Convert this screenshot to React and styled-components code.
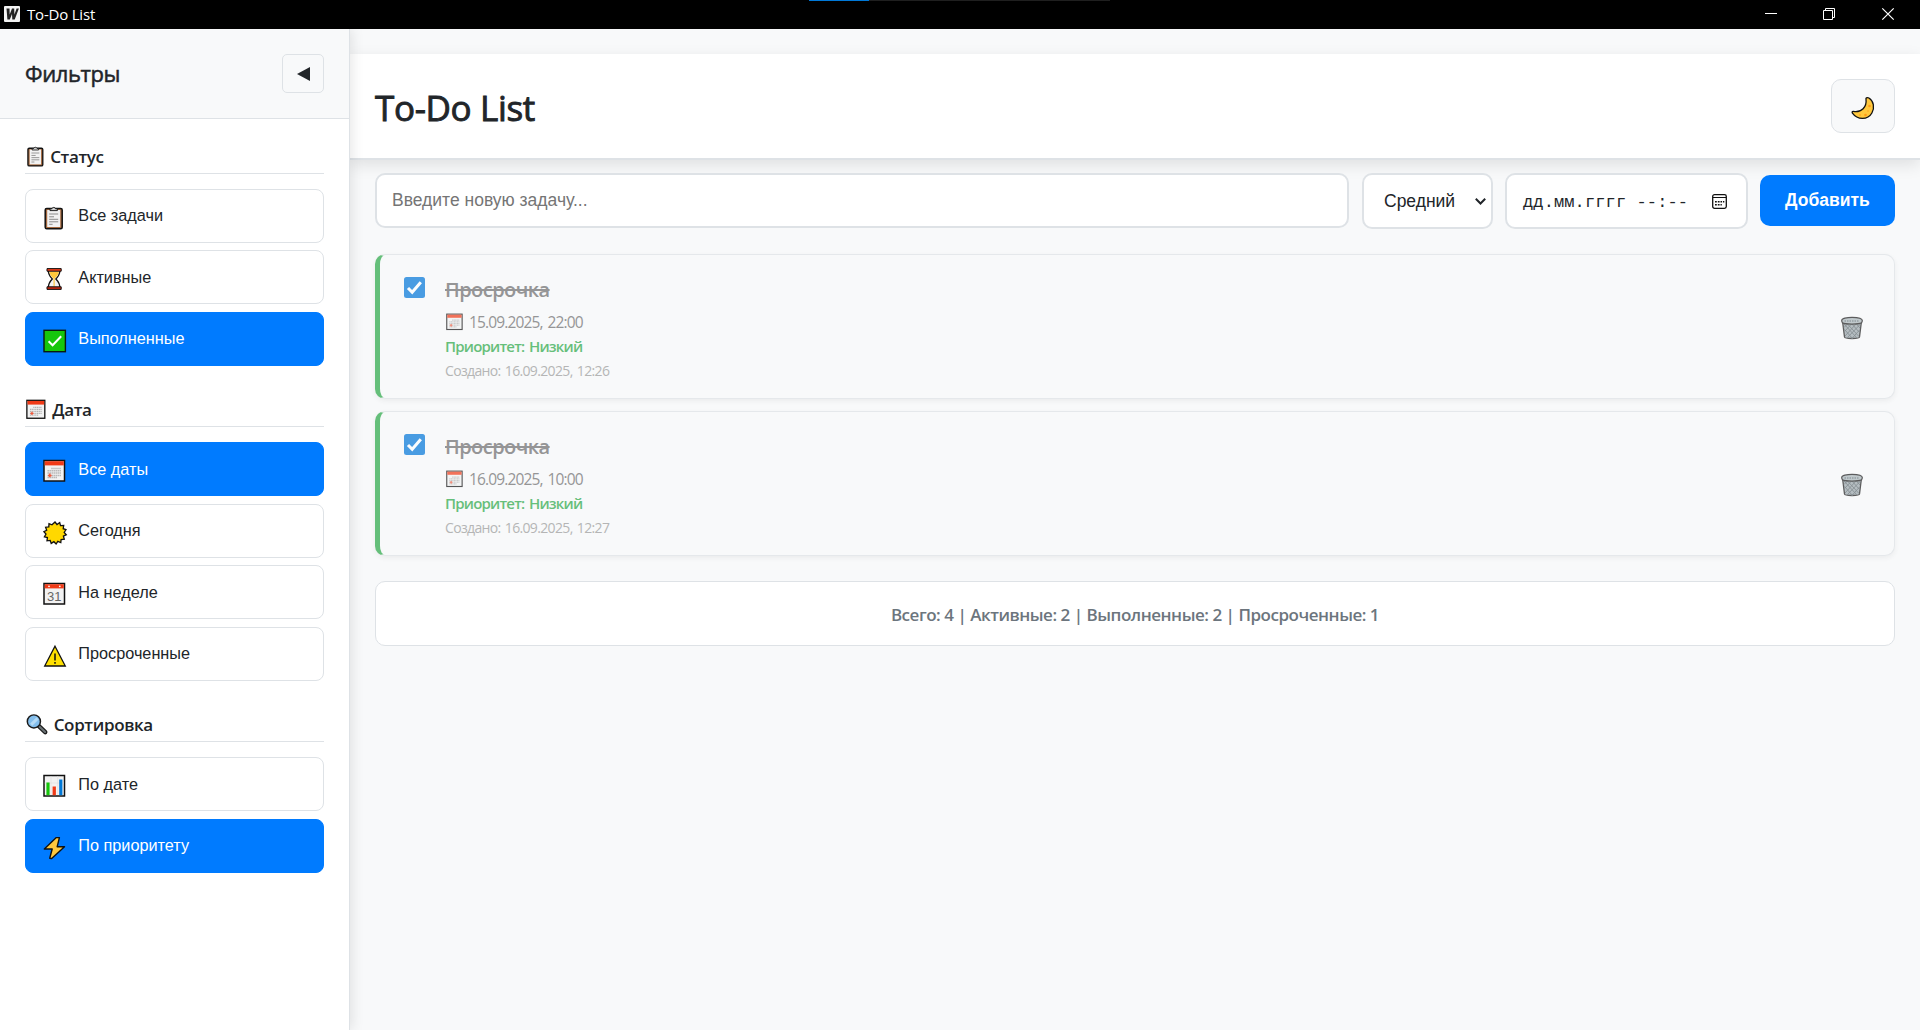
import React from "react";
import styled, { createGlobalStyle } from "styled-components";

const ui = `"Open Sans", "Noto Sans", sans-serif`;
const sans = `"Liberation Sans", Arial, sans-serif`;

const Global = createGlobalStyle`
  * { box-sizing: border-box; }
  html, body, #root { height: 100%; margin: 0; }
  body { background: #f8f9fa; color: #212529; font-family: ${ui}; overflow: hidden; }
  button, input { font-family: ${sans}; margin: 0; }
`;

const Window = styled.div`
  display: flex;
  flex-direction: column;
  height: 100vh;
`;
const TitleBar = styled.header`
  position: relative;
  flex: none;
  display: flex;
  align-items: center;
  height: 29px;
  padding: 0 0 1px 4px;
  background: #000;
  color: #fff;
`;
const AppName = styled.span`
  flex: 1;
  margin-left: 7px;
  font-size: 15px;
  letter-spacing: -0.2px;
`;
const LoadStrip = styled.div`
  position: absolute;
  top: 0;
  left: 809px;
  width: 301px;
  height: 1px;
  background: linear-gradient(to right, #0078d7 60px, #1f1f1f 60px);
`;
const Controls = styled.div`
  display: flex;
  gap: 46px;
  padding-right: 26px;
  & > :last-child { margin-left: 1px; }
`;
const Glyph = styled.svg`
  display: block;
  flex: none;
  overflow: visible;
  width: ${(p) => p.$w}px;
  height: ${(p) => p.$h || p.$w}px;
`;
const Body = styled.div`
  flex: 1;
  display: flex;
  min-height: 0;
`;

const Sidebar = styled.aside`
  position: relative;
  z-index: 2;
  flex: none;
  width: 350px;
  background: #fff;
  border-right: 1px solid #dee2e6;
  box-shadow: 2px 0 12px rgba(0, 0, 0, 0.1);
`;
const SidebarHead = styled.div`
  display: flex;
  align-items: center;
  justify-content: space-between;
  height: 90px;
  padding: 0 25px;
  background: #f8f9fa;
  border-bottom: 1px solid #dee2e6;
`;
const SidebarTitle = styled.h3`
  margin: -2px 0 0;
  font-size: 22px;
  line-height: 30px;
  font-weight: 400;
  letter-spacing: -0.4px;
  -webkit-text-stroke: 0.5px currentColor;
`;
const Collapse = styled.button`
  display: grid;
  place-items: center;
  width: 42px;
  height: 39px;
  padding: 0;
  background: #f8f9fa;
  border: 1px solid #dee2e6;
  border-radius: 5px;
`;
const Sections = styled.div`
  display: flex;
  flex-direction: column;
  gap: 31.2px;
  padding: 24.7px 25px;
`;
const SectionTitle = styled.h4`
  display: flex;
  align-items: center;
  gap: ${(p) => p.$gap}px;
  height: 30.2px;
  margin: 0 0 15px;
  padding: 0 0 4px 1.2px;
  border-bottom: 1px solid #dee2e6;
  font-size: 17px;
  font-weight: 600;
  letter-spacing: -0.35px;
`;
const FilterList = styled.div`
  display: flex;
  flex-direction: column;
  gap: 7.5px;
`;
const Filter = styled.button`
  display: flex;
  align-items: center;
  gap: 11.5px;
  height: 54px;
  padding: 0 16px 0 16.8px;
  border: 1px solid ${(p) => (p.$active ? "#007bff" : "#dee2e6")};
  border-radius: 8px;
  background: ${(p) => (p.$active ? "#007bff" : "#fff")};
  color: ${(p) => (p.$active ? "#fff" : "#212529")};
  font-size: 16.25px;
  text-align: left;
  & > svg { margin-top: 4px; }
`;

const Main = styled.main`
  flex: 1;
  min-width: 0;
  padding-top: 25px;
`;
const PageHead = styled.div`
  display: flex;
  align-items: center;
  justify-content: space-between;
  height: 106px;
  padding: 0 25px;
  background: #fff;
  border-bottom: 2px solid #dee2e6;
  box-shadow: 0 5px 15px rgba(0, 0, 0, 0.1);
`;
const PageTitle = styled.h1`
  margin: 3px 0 0;
  font-size: 35px;
  line-height: 44px;
  font-weight: 400;
  letter-spacing: -0.35px;
  -webkit-text-stroke: 0.9px currentColor;
`;
const ThemeButton = styled.button`
  display: grid;
  place-items: center;
  width: 64px;
  height: 54px;
  padding: 3px 0 0;
  background: #f8f9fa;
  border: 1px solid #dee2e6;
  border-radius: 10px;
`;
const Content = styled.div`
  padding: 13px 25px 0;
`;
const AddForm = styled.div`
  display: flex;
  align-items: flex-start;
  height: 56px;
`;
const TaskInput = styled.input`
  width: 974px;
  height: 55px;
  margin-right: 13px;
  padding: 0 15px;
  background: #fff;
  border: 2px solid #dee2e6;
  border-radius: 10px;
  font-size: 17.5px;
  outline: none;
  &::placeholder { color: #757575; opacity: 1; }
`;
const PrioritySelect = styled.button`
  display: flex;
  align-items: center;
  justify-content: space-between;
  width: 131px;
  height: 56px;
  margin-right: 12px;
  padding: 0 5px 0 20px;
  background: #fff;
  color: #212529;
  border: 2px solid #dee2e6;
  border-radius: 10px;
  font-size: 17.5px;
`;
const DateField = styled.div`
  display: flex;
  align-items: center;
  justify-content: space-between;
  width: 243px;
  height: 56px;
  margin-right: 12px;
  padding: 0 19px 0 16px;
  background: #fff;
  border: 2px solid #dee2e6;
  border-radius: 10px;
  font-family: "Liberation Mono", monospace;
  font-size: 17px;
  letter-spacing: 0.12px;
  white-space: pre;
  & > span { margin-top: 2px; }
`;
const AddButton = styled.button`
  width: 135px;
  height: 51px;
  margin-top: 2px;
  padding: 0;
  border: 0;
  border-radius: 10px;
  background: #007bff;
  color: #fff;
  font-size: 17.5px;
  font-weight: 700;
`;
const TaskList = styled.div`
  display: flex;
  flex-direction: column;
  gap: 12.5px;
  margin-top: 25px;
`;
const Task = styled.article`
  display: flex;
  align-items: center;
  height: 144.5px;
  padding: 0 30.5px 0 24px;
  background: #f8f9fa;
  border: 1px solid #dee2e6;
  border-left: 5px solid #28a745;
  border-radius: 10px;
  box-shadow: 0 2px 5px rgba(0, 0, 0, 0.07);
  opacity: 0.7;
  & > svg { margin-top: 4px; }
`;
const Check = styled.span`
  display: grid;
  place-items: center;
  align-self: flex-start;
  width: 21px;
  height: 21px;
  margin: 22px 20px 0 0;
  border-radius: 2.5px;
  background: #0075d9;
`;
const TaskText = styled.div`
  flex: 1;
  display: flex;
  flex-direction: column;
  align-items: flex-start;
  padding-top: 4px;
`;
const TaskName = styled.div`
  height: 36px;
  line-height: 33px;
  font-size: 20px;
  font-weight: 600;
  letter-spacing: -0.55px;
  color: #6c6c6c;
  text-decoration: line-through;
  text-decoration-thickness: 2px;
`;
const Due = styled.div`
  display: flex;
  align-items: center;
  gap: 5px;
  height: 25px;
  padding-left: 1px;
  font-size: 15.5px;
  letter-spacing: -0.85px;
  word-spacing: 1.5px;
  color: #6c6c6c;
`;
const Priority = styled.div`
  height: 25px;
  line-height: 25px;
  font-size: 15px;
  font-weight: 600;
  letter-spacing: -0.8px;
  word-spacing: 1.5px;
  color: #28a745;
`;
const Created = styled.div`
  height: 24px;
  line-height: 24px;
  font-size: 14px;
  letter-spacing: -0.65px;
  word-spacing: 1.2px;
  color: #999;
`;
const Stats = styled.div`
  display: grid;
  place-items: center;
  height: 65px;
  margin-top: 25px;
  padding-top: 2px;
  background: #fff;
  border: 1px solid #dee2e6;
  border-radius: 10px;
  color: #6c757d;
  font-size: 17px;
  font-weight: 600;
  letter-spacing: -0.47px;
`;

const art = {
  clipboard: (
    <>
      <rect x="2.2" y="2.6" width="17" height="20.2" rx="1.5" fill="#a5693f" stroke="#111" strokeWidth="1.5" />
      <path d="M4.200 4h13v17H4.200z" fill="#f2f2f2" />
      <path d="M7 4.6V2.8h1.8a2 2 0 0 1 3.8 0h1.8v1.8z" fill="#cfcfcf" stroke="#111" strokeWidth=".9" />
      <path d="M6.2 8h9M6.2 10.8h4.8M6.2 13.3h9M6.2 15.8h9M6.2 18.3h3.4" stroke="#8b8b8b" strokeWidth="1" />
    </>
  ),
  hourglass: (
    <>
      <path d="M5.3 3h11.6c0 4-1 6-4 9 3 3 4 5 4 9H5.3c0-4 1-6 4-9-3-3-4-5-4-9z" fill="#f2f2f2" stroke="#111" strokeWidth="1.3" />
      <path d="M6.200 4.600h9.800c-.5 3-2 5.300-4.300 6.900v8h-1.200v-8C8.200 9.900 6.700 7.600 6.200 4.600z" fill="#ffc83d" />
      <path d="M4 1.600h14.200v2.600H4z" fill="#f03a17" stroke="#111" strokeWidth="1" />
      <path d="M4 19.800h14.200v2.600H4z" fill="#c8260c" stroke="#111" strokeWidth="1" />
    </>
  ),
  done: (
    <>
      <rect x="1" y="1.300" width="21.400" height="21.400" fill="#16c60c" stroke="#0a1a10" strokeWidth="1.400" />
      <path d="M5.600 12.300l4 4 8.600-9" fill="none" stroke="#fff" strokeWidth="2" />
    </>
  ),
  calendar: (
    <>
      <rect x="1" y="1.500" width="20.500" height="20.500" fill="#f2f2f2" stroke="#111" strokeWidth="1.500" />
      <path d="M1.700 2.200h19.100v4.200H1.700z" fill="#f03a17" />
      <path d="M8.300 9.500h10M4.500 11.800h13.800M4.500 14.100h13.800M4.500 16.400h13.800M4.500 18.500h9.500" stroke="#b3b3b3" strokeWidth="1.500" strokeDasharray="1.400 .6" />
      <path d="M6.800 14.600v3.600M5 16.400h3.600" stroke="#f0593c" strokeWidth="1.500" />
    </>
  ),
  sun: (
    <path
      d="M12 1l2 2.500L16.700 1.500l.8 3.100 3.200-.1-.5 3.200 2.800 1-1.800 2.700 2.100 2.300-2.900 1.500.9 3-3.200.3-.3 3.100-3-1.200-1.700 2.600-2.200-2.300-2.700 1.700-1-3-3.200.4.4-3.200-3-.8 1.600-2.800L.900 10.700l2.800-1.500-1.100-3 3.200-.3.200-3.200 3 1.100z"
      fill="#ffd800"
      stroke="#111"
      strokeWidth="1.300"
    />
  ),
  week: (
    <>
      <rect x="1" y="1.500" width="20.500" height="20.500" fill="#f2f2f2" stroke="#111" strokeWidth="1.500" />
      <path d="M1.700 2.200h19.100v4.200H1.700z" fill="#f03a17" />
      <circle cx="6" cy="4.300" r=".9" fill="#fff" />
      <circle cx="16.800" cy="4.300" r=".9" fill="#fff" />
      <text x="11.300" y="18.900" textAnchor="middle" fontFamily="Liberation Sans, sans-serif" fontSize="13" fill="#666">31</text>
    </>
  ),
  warning: (
    <>
      <path d="M12 2.200L22.300 22H1.700z" fill="#ffe000" stroke="#111" strokeWidth="1.300" />
      <path d="M12 9.500v7M12 18v1.800" stroke="#111" strokeWidth="1.500" />
    </>
  ),
  search: (
    <>
      <path d="M14.500 13.500l7.500 7.200" stroke="#1b1b1b" strokeWidth="5" strokeLinecap="round" />
      <path d="M15.500 14.500l6.300 6" stroke="#6b7376" strokeWidth="2.400" strokeLinecap="round" />
      <circle cx="9" cy="8.500" r="7.500" fill="#83beec" stroke="#1b1b1b" strokeWidth="1.700" />
      <path d="M4.800 10.800l7.200-7.200 2.400 2.600-7.400 7.400z" fill="#b5daf5" />
    </>
  ),
  chart: (
    <>
      <rect x="1" y="1.500" width="20.500" height="20.500" fill="#f2f2f2" stroke="#111" strokeWidth="1.500" />
      <path d="M1.700 9h19M8 2v19M14.700 2v19" stroke="#ddd" strokeWidth=".6" />
      <path d="M3.400 8.500h3.200v12.700H3.400z" fill="#16c60c" />
      <path d="M9.600 12.500h3.300v8.700H9.600z" fill="#f03a17" />
      <path d="M16.200 5.500h3.200v15.700h-3.200z" fill="#0078d7" />
    </>
  ),
  bolt: (
    <path d="M13.300 1.600L1.300 13h7.900l-2.500 9.300 2 .2L21.500 10.700h-7.300l2.200-9.100z" fill="#ffc83d" stroke="#111" strokeWidth="1.400" strokeLinejoin="round" />
  ),
  moon: (
    <>
      <path d="M15.500 1.800c-.6.300-.7.700-.5 1.300 1 7.800-4.500 13.800-12.600 12.300-1.300-.1-1.500.8-1 1.800 5 6.900 15.300 7.100 19.500-.2 3-5.300 1.800-12-3-15-.8-.5-1.600-.6-2.400-.2z" fill="#ffc83d" stroke="#111" strokeWidth="1.300" />
      <circle cx="18.500" cy="10" r="1.300" fill="#ff9a16" />
      <circle cx="14.500" cy="19" r="1.300" fill="#ff9a16" />
      <circle cx="9" cy="19" r=".8" fill="#ff9a16" />
      <circle cx="17" cy="15" r=".7" fill="#ff9a16" />
    </>
  ),
  trash: (
    <>
      <path d="M2.500 5l2 16c.3 2 14.700 2 15 0l2-16z" fill="#9aa5aa" stroke="#1b1b1b" strokeWidth="1.300" />
      <path
        d="M4 8l13 14M4.500 13.500l8 9M7 7.500l12 13M11.500 7.500l8 9M16 7.500l4 4.500M20.500 8L7 22M19.500 14l-8 9M16.500 7.500L5 20M12 7.500L4.500 15.500M8 7.500L4 11.500"
        stroke="#59656b"
        strokeWidth=".9"
      />
      <path d="M1.700 4.600C1.700.300 22.300.300 22.300 4.600c0 .9-.3 1.500-.8 2.300-3 1.500-16 1.500-19 0-.5-.8-.8-1.400-.8-2.300z" fill="#a9b5b9" stroke="#1b1b1b" strokeWidth="1.200" />
      <path d="M4.500 5h15" stroke="#6c7a80" strokeWidth="1.600" strokeDasharray="1.500 1" />
    </>
  ),
};

const Icon = ({ name, size = 24 }) => (
  <Glyph $w={size} viewBox="0 0 24 24">{art[name]}</Glyph>
);

const sections = [
  {
    title: "Статус", icon: "clipboard", gap: 3,
    items: [["clipboard", "Все задачи"], ["hourglass", "Активные"], ["done", "Выполненные", true]],
  },
  {
    title: "Дата", icon: "calendar", gap: 5,
    items: [["calendar", "Все даты", true], ["sun", "Сегодня"], ["week", "На неделе"], ["warning", "Просроченные"]],
  },
  {
    title: "Сортировка", icon: "search", gap: 6.5,
    items: [["chart", "По дате"], ["bolt", "По приоритету", true]],
  },
];

const tasks = [
  { name: "Просрочка", due: "15.09.2025, 22:00", created: "16.09.2025, 12:26" },
  { name: "Просрочка", due: "16.09.2025, 10:00", created: "16.09.2025, 12:27" },
];

const TaskCard = ({ task }) => (
  <Task>
    <Check>
      <Glyph $w={17} viewBox="0 0 17 17">
        <path d="M2 9l4.200 4.300L14.800 3.300" fill="none" stroke="#fff" strokeWidth="3" />
      </Glyph>
    </Check>
    <TaskText>
      <TaskName>{task.name}</TaskName>
      <Due><Icon name="calendar" size={18} />{task.due}</Due>
      <Priority>Приоритет: Низкий</Priority>
      <Created>Создано: {task.created}</Created>
    </TaskText>
    <Icon name="trash" />
  </Task>
);

export default function App() {
  return (
    <Window>
      <Global />
      <TitleBar>
        <Glyph $w={16} viewBox="0 0 16 16">
          <rect width="16" height="16" rx="1" fill="#f4f4f4" />
          <path d="M2.500 2.500h3l.2 6 2.300-6h2.200l.2 6 2.200-6h2.300L10.700 13.500H8.300L8 8l-2.200 5.500H3.400z" fill="#222" />
        </Glyph>
        <AppName>To-Do List</AppName>
        <LoadStrip />
        <Controls>
          <Glyph $w={12} viewBox="0 0 12 12"><path d="M0 5.500h12" stroke="#fff" /></Glyph>
          <Glyph $w={12} viewBox="0 0 12 12"><path d="M.5 2.500h9v9h-9zM2.500 2.500v-2h9v9h-2" fill="none" stroke="#fff" /></Glyph>
          <Glyph $w={12} viewBox="0 0 12 12"><path d="M.3.300l11.400 11.400M11.700.300L.300 11.700" stroke="#fff" strokeWidth="1.200" /></Glyph>
        </Controls>
      </TitleBar>
      <Body>
        <Sidebar>
          <SidebarHead>
            <SidebarTitle>Фильтры</SidebarTitle>
            <Collapse>
              <Glyph $w={13} $h={14} viewBox="0 0 13 14"><path d="M13 0v14L0 7z" fill="#212529" /></Glyph>
            </Collapse>
          </SidebarHead>
          <Sections>
            {sections.map((s) => (
              <section key={s.title}>
                <SectionTitle $gap={s.gap}><Icon name={s.icon} size={21} />{s.title}</SectionTitle>
                <FilterList>
                  {s.items.map(([icon, label, active]) => (
                    <Filter key={label} $active={active}><Icon name={icon} /><span>{label}</span></Filter>
                  ))}
                </FilterList>
              </section>
            ))}
          </Sections>
        </Sidebar>
        <Main>
          <PageHead>
            <PageTitle>To-Do List</PageTitle>
            <ThemeButton><Icon name="moon" /></ThemeButton>
          </PageHead>
          <Content>
            <AddForm>
              <TaskInput placeholder="Введите новую задачу..." />
              <PrioritySelect>
                Средний
                <Glyph $w={11} $h={7} viewBox="0 0 11 7"><path d="M.8.800l4.700 4.700L10.200.800" fill="none" stroke="#212529" strokeWidth="2" /></Glyph>
              </PrioritySelect>
              <DateField>
                <span>дд.мм.гггг --:--</span>
                <Glyph $w={15} viewBox="0 0 15 15">
                  <rect x=".7" y=".7" width="13.600" height="13.600" rx="1.800" fill="none" stroke="#111" strokeWidth="1.300" />
                  <path d="M1 3.500h13" stroke="#111" strokeWidth="1" />
                  <path d="M3 7h1.800v1.600H3zM5.800 7h1.800v1.600H5.800zM8.500 7h1.600v1.600H8.500zM11 7h1.300v1.600H11zM3 10h1.800v1.600H3zM5.800 10h1.800v1.600H5.800zM8.500 10h1.300v1.600H8.500z" fill="#111" />
                </Glyph>
              </DateField>
              <AddButton>Добавить</AddButton>
            </AddForm>
            <TaskList>
              {tasks.map((t) => <TaskCard key={t.created} task={t} />)}
            </TaskList>
            <Stats>Всего: 4 | Активные: 2 | Выполненные: 2 | Просроченные: 1</Stats>
          </Content>
        </Main>
      </Body>
    </Window>
  );
}
